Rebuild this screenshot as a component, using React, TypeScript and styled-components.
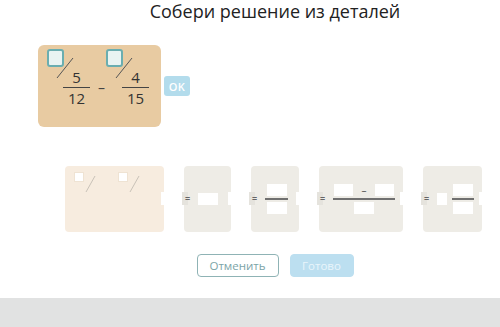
import React from 'react';
import styled, { createGlobalStyle } from 'styled-components';

const GlobalStyle = createGlobalStyle`
  html, body {
    margin: 0;
    padding: 0;
    background: #e1e2e2;
    font-family: 'Open Sans', 'Liberation Sans', sans-serif;
  }
`;

const Panel = styled.div`
  height: 298px;
  background: #fff;
  box-shadow: 0 1px 3px rgba(0, 0, 0, 0.35);
  display: flex;
  flex-direction: column;
`;

const Title = styled.h1`
  margin: 0;
  padding-left: 50px;
  text-align: center;
  font-size: 18px;
  line-height: 23px;
  font-weight: 400;
  color: #222;
`;

const TaskRow = styled.div`
  margin-top: 22px;
  padding-left: 38px;
  display: flex;
  align-items: center;
  gap: 3px;
`;

const TaskCard = styled.div`
  width: 123px;
  height: 82px;
  box-sizing: border-box;
  padding: 3px 0 0 25px;
  background: #e8cba2;
  border-radius: 6px;
  display: flex;
  align-items: center;
`;

const Fraction = styled.div`
  position: relative;
  width: 27px;
  display: flex;
  flex-direction: column;
  align-items: center;
  gap: 2px;
`;

const Digit = styled.span`
  font-size: 15px;
  line-height: 16px;
  color: #333;
`;

const Bar = styled.div`
  align-self: stretch;
  height: 1.5px;
  background: #444;
`;

const CheckBox = styled.div`
  position: absolute;
  left: -16px;
  top: -20px;
  width: 17px;
  height: 18px;
  box-sizing: border-box;
  border: 2px solid #6aaeb0;
  border-radius: 3px;
  background: #e9f4f2;
`;

const Slash = styled.svg`
  position: absolute;
  left: -7px;
  top: -12px;
`;

const Minus = styled.span<{ $ml: number; $mr: number }>`
  margin: 0 ${p => p.$mr}px 0 ${p => p.$ml}px;
  font-size: 14px;
  line-height: 16px;
  color: #444;
`;

const OkButton = styled.button`
  width: 26px;
  height: 20px;
  padding: 0;
  border: none;
  border-radius: 3px;
  background: #b3dcec;
  color: #fff;
  font-family: inherit;
  font-size: 11px;
  font-weight: 600;
  letter-spacing: 0.3px;
`;

const PiecesRow = styled.div`
  margin-top: 39px;
  padding-left: 65px;
  display: flex;
  gap: 20px;
`;

const Piece = styled.div<{ $w: number; $tan?: boolean }>`
  position: relative;
  width: ${p => p.$w}px;
  height: 66px;
  box-sizing: border-box;
  border-radius: 4px;
  background: ${p => (p.$tan ? '#f7ecdf' : '#eeece6')};
  display: flex;
  align-items: ${p => (p.$tan ? 'flex-start' : 'center')};
  padding: ${p => (p.$tan ? '6px 0 0 9px' : '0 0 0 1px')};
  gap: ${p => (p.$tan ? '22px' : '8px')};

  &::before {
    content: '';
    display: ${p => (p.$tan ? 'none' : 'block')};
    position: absolute;
    left: -2px;
    top: 26px;
    width: 6px;
    height: 13px;
    background: #e5e3dd;
  }

  &::after {
    content: '';
    position: absolute;
    right: 0;
    top: 26px;
    width: 3px;
    height: 13px;
    background: #fff;
  }
`;

const Eq = styled.span`
  position: relative;
  z-index: 1;
  width: 5px;
  font-size: 9px;
  line-height: 10px;
  font-weight: 700;
  color: #666;
  text-align: center;
`;

const Slot = styled.div<{ $w: number }>`
  width: ${p => p.$w}px;
  height: 12px;
  background: #fff;
`;

const SlotFraction = styled.div<{ $w: number }>`
  width: ${p => p.$w}px;
  display: flex;
  flex-direction: column;
  align-items: center;
  gap: 2px;
`;

const SlotBar = styled.div`
  align-self: stretch;
  height: 2px;
  background: #707070;
`;

const SlotTop = styled.div`
  align-self: stretch;
  padding: 0 1px;
  display: flex;
  align-items: center;
  justify-content: space-between;
`;

const SlotMinus = styled.span`
  font-size: 10px;
  line-height: 10px;
  color: #555;
`;

const Mixed = styled.div`
  display: flex;
  align-items: center;
  gap: 5px;
`;

const EmptyPair = styled.div`
  display: flex;
  align-items: flex-start;
`;

const SmallBox = styled.div`
  width: 10px;
  height: 10px;
  box-sizing: border-box;
  background: #fff;
  border: 1px solid #efe3d3;
`;

const Actions = styled.div`
  margin-top: 22px;
  padding-left: 50px;
  display: flex;
  justify-content: center;
  gap: 11px;
`;

const ActionButton = styled.button<{ $primary?: boolean }>`
  height: 23px;
  padding: 0;
  width: ${p => (p.$primary ? 64 : 82)}px;
  box-sizing: border-box;
  border-radius: 4px;
  border: 1px solid ${p => (p.$primary ? '#bcdff0' : '#8fb3b5')};
  background: ${p => (p.$primary ? '#bcdff0' : '#fff')};
  color: ${p => (p.$primary ? '#e9f5fb' : '#7ba4a8')};
  font-family: inherit;
  font-size: 11.5px;
`;

const TaskFraction = ({ num, den }: { num: string; den: string }) => (
  <Fraction>
    <CheckBox />
    <Slash width="18" height="22" viewBox="0 0 18 22">
      <line x1="17" y1="1" x2="1" y2="21" stroke="#555" strokeWidth="1" />
    </Slash>
    <Digit>{num}</Digit>
    <Bar />
    <Digit>{den}</Digit>
  </Fraction>
);

const EmptyFraction = () => (
  <EmptyPair>
    <SmallBox />
    <svg width="12" height="20" viewBox="0 0 12 20" style={{ marginTop: 2 }}>
      <line x1="11" y1="2" x2="2" y2="18" stroke="#c9c2b8" strokeWidth="1" />
    </svg>
  </EmptyPair>
);

export default function App() {
  return (
    <>
      <GlobalStyle />
      <Panel>
        <Title>Собери решение из деталей</Title>

        <TaskRow>
          <TaskCard>
            <TaskFraction num="5" den="12" />
            <Minus $ml={8} $mr={17}>–</Minus>
            <TaskFraction num="4" den="15" />
          </TaskCard>
          <OkButton>OK</OkButton>
        </TaskRow>

        <PiecesRow>
          <Piece $w={99} $tan>
            <EmptyFraction />
            <EmptyFraction />
          </Piece>

          <Piece $w={47}>
            <Eq>=</Eq>
            <Slot $w={20} />
          </Piece>

          <Piece $w={48}>
            <Eq>=</Eq>
            <SlotFraction $w={23}>
              <Slot $w={20} />
              <SlotBar />
              <Slot $w={20} />
            </SlotFraction>
          </Piece>

          <Piece $w={84}>
            <Eq>=</Eq>
            <SlotFraction $w={62}>
              <SlotTop>
                <Slot $w={19} />
                <SlotMinus>–</SlotMinus>
                <Slot $w={19} />
              </SlotTop>
              <SlotBar />
              <Slot $w={20} />
            </SlotFraction>
          </Piece>

          <Piece $w={59}>
            <Eq>=</Eq>
            <Mixed>
              <Slot $w={10} />
              <SlotFraction $w={22}>
                <Slot $w={20} />
                <SlotBar />
                <Slot $w={20} />
              </SlotFraction>
            </Mixed>
          </Piece>
        </PiecesRow>

        <Actions>
          <ActionButton>Отменить</ActionButton>
          <ActionButton $primary>Готово</ActionButton>
        </Actions>
      </Panel>
    </>
  );
}
